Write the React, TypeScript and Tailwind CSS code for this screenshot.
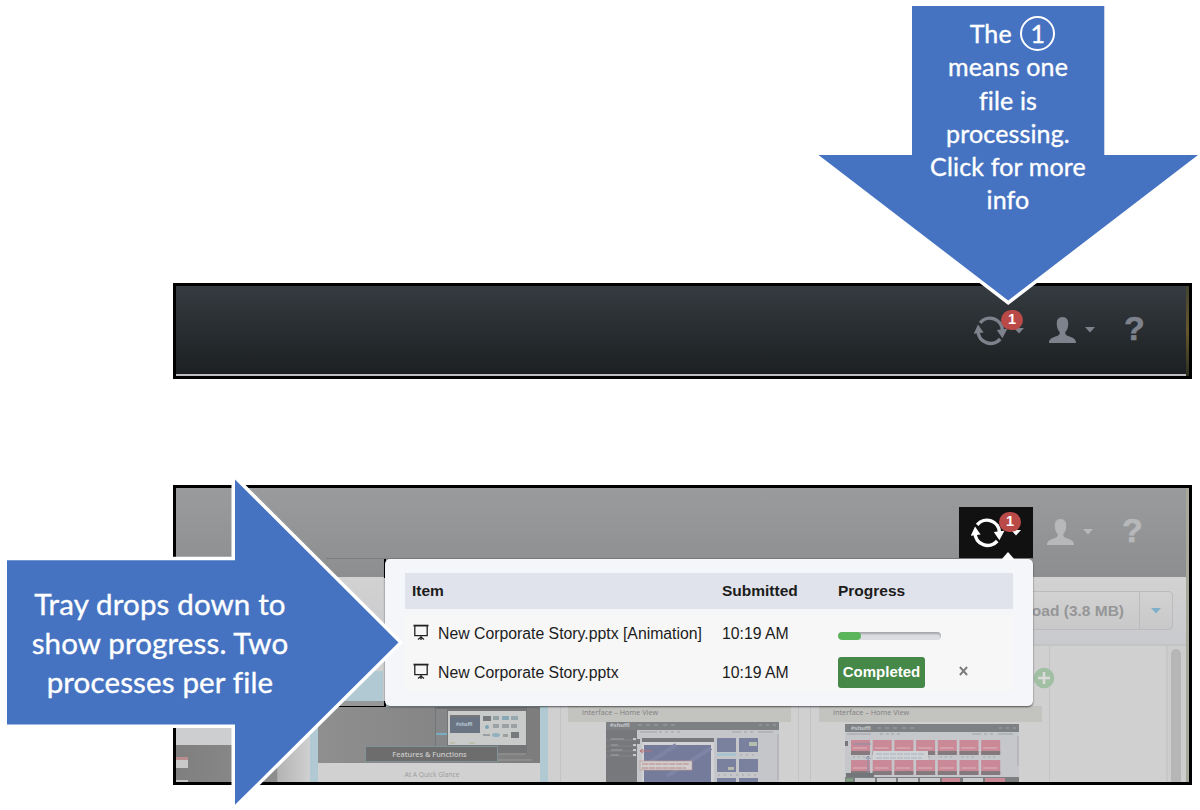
import React from "react";

const SLIDE_TITLE = "Interface – Home View";

function SyncIcon() {
  return (
    <svg width="34" height="30" viewBox="0 0 34 30" className="-mt-px shrink-0">
      <g fill="none" stroke="currentColor" strokeWidth="3.5">
        <path d="M6.2 6.800 A12.600 12.600 0 0 1 28.500 14.500" />
        <path d="M26.200 23 A12.600 12.600 0 0 1 4 15" />
      </g>
      <path d="M22.800 14 L33.400 12.800 L28.400 22.200 Z" fill="currentColor" />
      <path d="M-0.300 17.800 L9.600 16.600 L4 8.400 Z" fill="currentColor" />
    </svg>
  );
}

function PersonIcon() {
  return (
    <svg width="27" height="26" viewBox="0 0 27 26" className="shrink-0">
      <path
        fill="currentColor"
        d="M13.5 0C9.300 0 7.600 2.900 7.800 7.400c.1 3.600 1.400 5.800 2.900 7.600.3 2.300-.6 3.200-2.600 3.900C3.200 20.600 0 21.500 0 26h27c0-4.500-3.200-5.400-8.100-7.100-2-.7-2.900-1.600-2.600-3.900 1.500-1.800 2.800-4 2.900-7.600C19.400 2.900 17.700 0 13.500 0z"
      />
    </svg>
  );
}

function Caret() {
  return (
    <svg width="10" height="6" viewBox="0 0 10 6" className="shrink-0">
      <path d="M0 0H10L5 5.500Z" fill="currentColor" />
    </svg>
  );
}

function BoardIcon() {
  return (
    <svg width="16" height="17" viewBox="0 0 16 17" className="shrink-0" fill="none" stroke="#222" strokeWidth="1.300">
      <path d="M0.500 1.600H15.500" strokeWidth="1.800" />
      <path d="M1.800 2V11.700H14.200V2M8 12V16M5 15.500L8 13L11 15.500" />
    </svg>
  );
}

function HeaderIcons({ active = false }: { active?: boolean }) {
  return (
    <div
      className={
        active
          ? "flex justify-end pt-[19px] pr-[47px] text-[#b7b8ba]"
          : "flex justify-end pt-[19px] pr-[45px] text-[#7e828c]"
      }
    >
      <div
        className={
          active
            ? "relative flex h-[52px] w-[74px] items-center bg-[#111] pl-3 text-white"
            : "relative flex h-[52px] w-[74px] items-center pl-[13px]"
        }
      >
        <SyncIcon />
        <span className="ml-[6px] flex"><Caret /></span>
        <span className="absolute top-[5px] left-[40px] flex h-5 w-[22px] items-center justify-center rounded-full bg-[#b94a48] text-[14.500px] font-bold text-white">
          1
        </span>
      </div>
      <div className="ml-[14px] flex h-[50px] items-center">
        <PersonIcon />
        <span className="ml-[9px] flex"><Caret /></span>
        <span className="ml-[30px] flex h-[50px] w-[19px] items-center justify-center pb-[3px] text-[34px] font-bold [-webkit-text-stroke:0.600px_currentColor]">?</span>
      </div>
    </div>
  );
}

function FeatureThumb() {
  return (
    <div className="relative h-[56px] w-[222px] bg-[#858585]">
      <svg width="222" height="56" viewBox="0 0 222 56">
        <defs>
          <linearGradient id="feature" x1="0" x2="1">
            <stop offset="0" stopColor="#8f8f8f" />
            <stop offset="1" stopColor="#7d7d7d" />
          </linearGradient>
        </defs>
        <rect width="222" height="56" fill="url(#feature)" />
        <rect x="117" width="92" height="48" fill="#747577" />
        <rect x="118" y="2" width="11" height="37" fill="#858788" />
        <rect x="118" y="26" width="11" height="2" fill="#78adc4" />
        <rect x="130" y="4" width="78" height="34" fill="#c9caca" />
        <rect x="132" y="8" width="30" height="18" fill="#6b7482" />
        <rect x="132" y="8" width="30" height="2" fill="#777" />
        <rect x="165" y="9" width="8" height="5" fill="#777a7c" />
        <rect x="175" y="9" width="6" height="4" fill="#94a1a5" />
        <rect x="184" y="9" width="7" height="4" fill="#87a9b5" />
        <rect x="193" y="9" width="7" height="4" fill="#96a7ad" />
        <circle cx="169" cy="20" r="2" fill="#7fa4b1" />
        <path d="M175 17h6v4h-6zM184 17h7v4h-7zM193 17h6v4h-6z" fill="#9ba1a3" />
        <ellipse cx="178" cy="28" rx="4" ry="2" fill="#91b1be" />
        <path d="M165 27h7v2h-7zM185 27h5v3h-5z" fill="#9aa0a2" />
        <rect x="193" y="25" width="8" height="6" fill="#777a7c" />
        <path d="M132 36h5M151 36h6" stroke="#b9b284" />
        <path d="M180 47h28" stroke="#a1a1a1" />
        <path d="M118 53h96" stroke="#929292" strokeWidth="1.500" />
      </svg>
      <span className="absolute top-[14px] left-[138px] text-[5px] font-bold text-[#bdd0db]">#shuffl</span>
      <span className="absolute top-[39px] left-[47px] flex h-[16px] w-[133px] items-center justify-center border border-[#7f9297] bg-[#6d6d6d] pr-1 font-['Open_Sans'] text-[7.300px] font-semibold whitespace-nowrap text-[#c8c8c8]">
        Features &amp; Functions
      </span>
    </div>
  );
}

function HomeThumb() {
  return (
    <div className="relative ml-[38px] h-[61px] w-[173px]">
      <svg width="173" height="61" viewBox="0 0 173 61">
        <rect width="173" height="61" fill="#c4c6ca" />
        <rect width="173" height="8" fill="#7e8184" />
        <rect y="8" width="31" height="53" fill="#77787b" />
        <path d="M0 18h31M0 24h31M0 29h31M0 34h31" stroke="#838486" />
        <path d="M5 17h13M5 23h7M5 28h11M5 33h8M32 3h4M40 3h4M48 3h4M57 3h4M65 3h4M153 3h3M160 3h3M167 3h3" stroke="#a0a2a4" />
        <path d="M27 17h3M27 23h3M27 28h3M27 33h3" stroke="#c7c8ca" strokeWidth="2" />
        <path d="M34 10h17M53 10h3M59 10h3M65 10h3M71 10h3M126 10h9M138 10h3M144 10h3M152 10h15" stroke="#9fa1a5" />
        <rect x="36" y="16" width="72" height="45" fill="#d2d2d4" />
        <rect x="36" y="16" width="72" height="4" fill="#77787b" />
        <rect x="31" y="17" width="3" height="5" fill="#777" />
        <rect x="38" y="23" width="67" height="38" fill="#747b9b" />
        <path d="M38 44L70 23M61 54L105 26" stroke="#7d84a4" strokeWidth="4" />
        <rect x="34" y="39" width="52" height="9" fill="#d0cece" stroke="#be9996" strokeWidth=".7" />
        <path d="M36 42h47M36 46h44" stroke="#bc8684" strokeWidth="1.200" strokeDasharray="6 .8" />
        <path d="M46 29H34m3-2-3 2 3 2" fill="none" stroke="#b57277" />
        <g fill="#7a819f">
          <rect x="111" y="16" width="19" height="14" />
          <rect x="133" y="16" width="19" height="14" />
          <rect x="111" y="37" width="19" height="13" />
          <rect x="133" y="37" width="19" height="13" />
          <rect x="111" y="56" width="19" height="5" />
          <rect x="133" y="56" width="19" height="5" />
        </g>
        <rect x="111" y="31" width="19" height="3" fill="#a7c4cf" />
        <rect x="143" y="20" width="8" height="4" fill="#b5bdae" />
        <rect x="122" y="45" width="6" height="3" fill="#b7b8ac" />
        <path d="M112 53h38M134 33h16" stroke="#a4a5aa" strokeDasharray="2 4" />
        <path d="M172 12v46" stroke="#aaa" />
      </svg>
      <span className="absolute top-0 left-[4px] text-[6px] leading-[7px] font-bold text-[#c8cccf]">#shuffl</span>
    </div>
  );
}

const TILES = [0, 1, 2, 3, 4, 5, 6];

function GridThumb() {
  return (
    <div className="relative mt-[2px] ml-[26px] h-[59px] w-[174px]">
      <svg width="174" height="59" viewBox="0 0 174 59">
        <rect width="174" height="59" fill="#c5c7cb" />
        <rect width="174" height="8" fill="#7e8184" />
        <path d="M32 4h4M40 4h4M48 4h4M57 4h4M65 4h4M154 4h3M161 4h3M168 4h3" stroke="#a0a2a4" />
        <path d="M2 10h24M35 10h3M41 10h3M46 10h3M52 10h3M127 10h9M139 10h3M145 10h3M153 10h15" stroke="#9fa1a5" />
        <rect y="17" width="3" height="5" fill="#777" />
        {TILES.map((n) => (
          <g key={n} transform={`translate(${6 + n * 21.700} 0)`}>
            <rect y="16" width="19" height="15" fill="#ca8997" />
            <rect y="27" width="19" height="4" fill="#847a7e" />
            <path d="M2 24h14" stroke="#deb7be" />
            <path d="M2 33h15" stroke="#a1a3a8" strokeDasharray="2 3" />
            <rect y="36" width="19" height="15" fill="#ca8997" />
            <rect y="47" width="19" height="4" fill="#847a7e" />
            <path d="M2 44h14" stroke="#deb7be" />
          </g>
        ))}
        <rect x="28" y="27" width="55" height="9" fill="#d1d2d4" />
        <path d="M31 30h48M31 34h46" stroke="#a5b2c2" strokeDasharray="6 1" />
        <path d="M8 20h18M23 33v18M21 35l2-3 2 3" fill="none" stroke="#8490ad" />
        <rect x="1" y="49" width="28" height="4" fill="#747779" />
        <rect y="53" width="174" height="6" fill="#7c7e80" />
        <path d="M10 56h20M32 56h19M53 56h20M75 56h20M118 56h20" stroke="#c9cacc" strokeWidth="4" />
        <path d="M97 56h18M140 56h20" stroke="#ca8997" strokeWidth="4" />
        <path d="M1 56h7" stroke="#7da37f" strokeWidth="3" />
        <path d="M173 12v30" stroke="#aaa" />
      </svg>
      <span className="absolute top-[1px] left-[6px] text-[6px] leading-[7px] font-bold text-[#c8cccf]">#shuffl</span>
    </div>
  );
}

function SlideTitle() {
  return (
    <div className="flex h-[16px] w-[223px] items-center bg-[#c3c3bf] pb-[3px] pl-[14px] font-['Open_Sans'] text-[7.300px] font-medium whitespace-nowrap text-[#7f7f7f]">
      {SLIDE_TITLE}
    </div>
  );
}

function Tray() {
  return (
    <section className="absolute top-[71px] left-[209px] h-[147px] w-[648px] rounded-[5px] bg-[#f5f6fa] px-5 pt-[14px] text-[15.800px] text-[#1c1c1c] shadow-[0_1px_2px_rgba(0,0,0,0.6)]">
      <svg width="14" height="8" viewBox="0 0 14 8" className="absolute -top-[7px] left-[616px]">
        <path d="M0 8L7 0L14 8Z" fill="#fff" />
      </svg>
      <div className="grid h-9 w-[608px] grid-cols-[310px_116px_1fr] items-center bg-[#e0e3eb] pl-[7px] text-[15.500px] font-bold">
        <span>Item</span>
        <span>Submitted</span>
        <span>Progress</span>
      </div>
      <div className="mt-[6px] w-[608px] bg-[#f7f7f7]">
        <div className="grid h-[37px] grid-cols-[26px_284px_116px_1fr] items-center pl-[7px]">
          <span className="-mt-[2px] ml-[1px]"><BoardIcon /></span>
          <span>New Corporate Story.pptx [Animation]</span>
          <span>10:19 AM</span>
          <div className="mt-1 h-2 w-[103px] overflow-hidden rounded-full bg-[#dcdde3] shadow-[inset_0_2px_2px_rgba(0,0,0,0.25)]">
            <div className="h-2 w-[23px] rounded-full bg-[#5bb65b]" />
          </div>
        </div>
        <div className="grid h-10 grid-cols-[26px_284px_116px_121px_1fr] items-center pl-[7px]">
          <span className="-mt-[2px] ml-[1px]"><BoardIcon /></span>
          <span className="pt-px">New Corporate Story.pptx</span>
          <span className="pt-px">10:19 AM</span>
          <span className="flex h-[31px] w-[87px] items-center justify-center rounded-[3px] bg-[#468847] text-[15px] font-bold text-white">
            Completed
          </span>
          <svg width="9" height="10" viewBox="0 0 10 10" className="-mt-[2px]" preserveAspectRatio="none" stroke="#7d7d7d" strokeWidth="2.200">
            <path d="M1 1L9 9M9 1L1 9" />
          </svg>
        </div>
      </div>
    </section>
  );
}

export default function App() {
  return (
    <main className="relative h-[810px] w-[1200px] overflow-hidden bg-white pt-[283px] pl-[173px] font-['Liberation_Sans',sans-serif]">
      <section className="flex h-[96px] w-[1019px] border-[3px] border-black bg-black">
        <div className="h-[90px] w-[1010px] border-b-2 border-[#bdbdc0] bg-linear-to-b from-[#363b41] to-[#1c2022] [&>div]:-mr-[3px]">
          <HeaderIcons />
        </div>
        <div className="w-[3px] bg-linear-to-b from-[#44442f] via-[#66572c] to-[#2c3020]" />
      </section>

      <section className="relative mt-[106px] h-[300px] w-[1019px] border-[3px] border-black bg-[#a8a89b]">
        <div className="h-[294px] w-[1010px] overflow-hidden bg-[#d0d0d1]">
          <header className="h-[89px] bg-linear-to-b from-[#9a9b9d] to-[#8d8e8f] shadow-[0_1px_5px_rgba(0,0,0,0.25)] [&>div]:-mr-[3px]">
            <HeaderIcons active />
          </header>
          <div className="flex h-[69px] justify-end border-b-2 border-[#c3c4c6] bg-linear-to-b from-[#d2d2d2] to-[#c9cacd] pt-[14px] pr-[13px]">
            <div className="flex h-[39px] rounded-[4px] border border-[#bbbbbd] bg-linear-to-b from-[#d2d2d2] to-[#c8c8c9]">
              <span className="flex items-center pr-[15px] pl-4 text-[15.500px] font-bold text-[#969697]">
                Download (3.8 MB)
              </span>
              <span className="flex w-[33px] items-center justify-center border-l border-[#bbbbbd] text-[#7eb0cc]">
                <Caret />
              </span>
            </div>
          </div>
          <div className="flex h-[136px]">
            <div className="h-full w-[101px] bg-[#cdced0] pt-[99px]">
              <div className="h-[37px] bg-linear-to-r from-[#7f7f7f] to-[#8d8d8d] pt-3">
                <div className="h-[11px] w-3 border-t-[3px] border-[#b98e8e] bg-[#c9c9c9]" />
                <div className="mt-3 h-1 w-3 bg-[#c5c5c5]" />
              </div>
            </div>
            <div className="h-full w-[33px] border-l border-[#aaa] bg-linear-to-r from-[#b4b4b5] to-[#d0d0d1]" />
            <article className="mt-[25px] h-[111px] w-[238px] bg-[#b0c9d3] px-2">
              <div className="h-[30px]" />
              <div className="-ml-2 h-[6px] w-[76px] border-b border-black bg-[#979899]" />
              <FeatureThumb />
              <div className="flex h-[19px] items-center justify-center bg-[#d1d1d1] pt-[5px] pr-[1px] pl-[7px] font-['Open_Sans'] text-[6.700px] font-medium text-[#9c9c9c]">
                At A Quick Glance
              </div>
            </article>
            <article className="ml-3 h-full w-[239px] border-x border-[#c3c3c7] pt-[60px] pl-[7px]">
              <SlideTitle />
              <HomeThumb />
            </article>
            <article className="ml-[11px] h-full w-[240px] border-x border-[#c3c3c7] pt-[60px] pl-[8px]">
              <SlideTitle />
              <GridThumb />
            </article>
            <div className="ml-auto h-full w-[20px] border-l-2 border-[#c7c7c8] bg-[#cdcdce] pt-[3px] pl-[3px]">
              <div className="h-full w-[10px] rounded-t-full bg-[#b6b6b6]" />
            </div>
          </div>
        </div>
        <svg width="22" height="22" viewBox="0 0 22 22" className="absolute top-[179px] left-[857px]">
          <circle cx="11" cy="11" r="10.300" fill="#a1bfa3" />
          <path d="M5 11H17M11 5V17" stroke="#dadada" strokeWidth="2.600" />
        </svg>
        <div className="absolute top-[71px] left-[208px] h-[148px] w-2 border-l-2 border-black" />
        <div className="absolute top-[90px] left-[207px] h-[123px] w-[2px] bg-[#cfcfd0]" />
        <div className="absolute top-[70px] left-[150px] h-px w-[708px] bg-[#7c7d7e]" />
        <Tray />
      </section>

      <svg width="1200" height="810" viewBox="0 0 1200 810" className="pointer-events-none absolute inset-0">
        <g fill="#4673c1" stroke="#fff" strokeWidth="7" paintOrder="stroke" strokeMiterlimit="10">
          <path d="M912 6H1104.300V155H1198L1008.200 300.500L818.500 155H912Z" />
          <path d="M7 560.300H235V479.500L398.500 642.500L235 804.800V724.500H7Z" />
        </g>
      </svg>
      <p className="absolute top-[17px] left-[912px] w-[192px] text-center font-['Lato'] text-[25px] leading-[33.300px] tracking-[0.15px] text-white [-webkit-text-stroke:0.350px_white]">
        <span className="inline-block pl-[9px]">
          The{" "}
          <span className="relative -top-[3px] -my-1 ml-[2px] inline-flex h-[35px] w-[35px] items-center justify-center rounded-full border-2 border-white align-middle">
            1
          </span>
        </span>
        <br />
        means one
        <br />
        file is
        <br />
        processing.
        <br />
        Click for more
        <br />
        info
      </p>
      <p className="absolute top-[584px] left-[7px] w-[306px] text-center font-['Lato'] text-[29.500px] leading-[39px] tracking-[0.15px] text-white [-webkit-text-stroke:0.350px_white]">
        Tray drops down to
        <br />
        show progress. Two
        <br />
        processes per file
      </p>
    </main>
  );
}
